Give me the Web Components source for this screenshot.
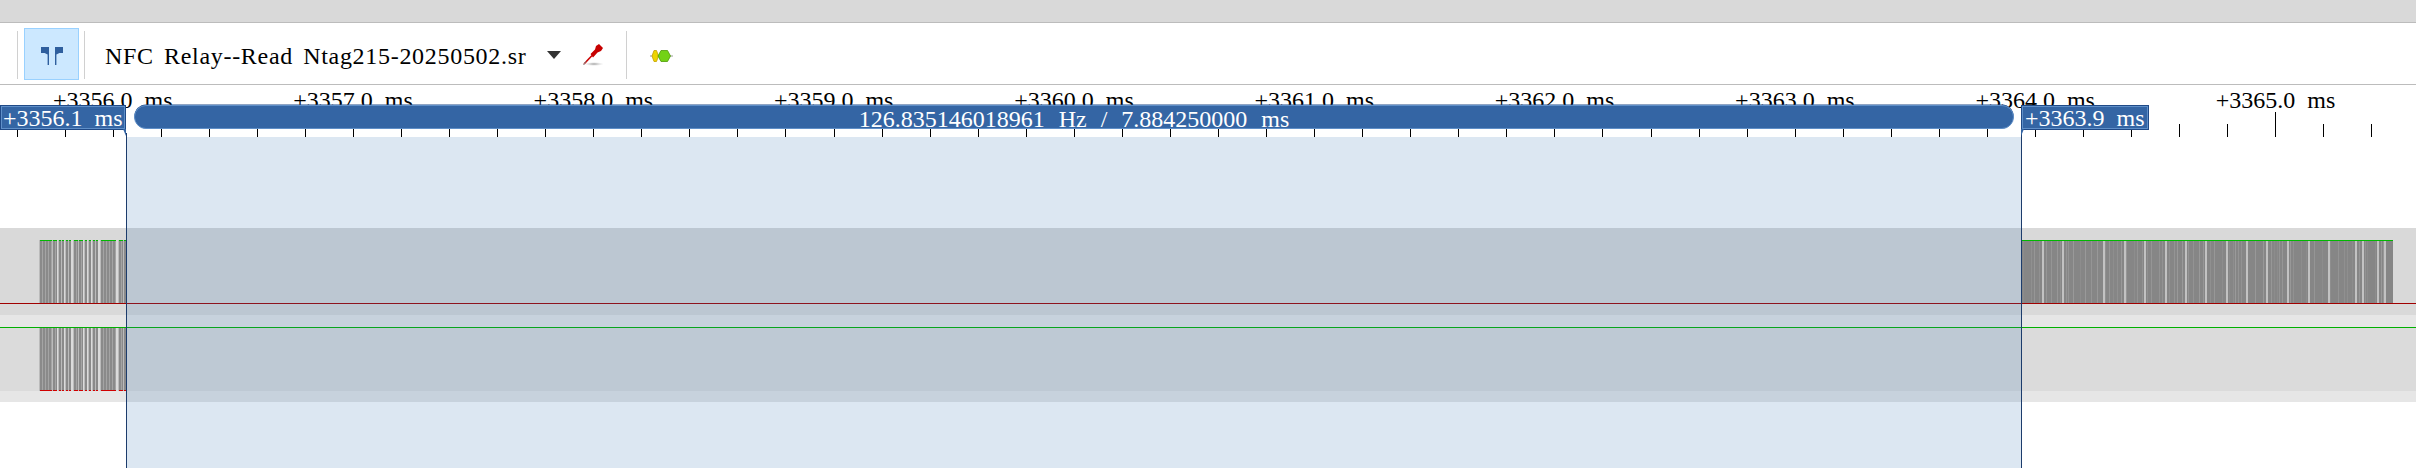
<!DOCTYPE html>
<html>
<head>
<meta charset="utf-8">
<title>PulseView</title>
<style>
    html, body { margin: 0; padding: 0; background: white; overflow: hidden; }
</style>
</head>
<body>
<pv-app>
    <pv-toolbar slot="toolbar">
        <pv-sep></pv-sep>
        <pv-button></pv-button>
        <pv-sep></pv-sep>
        <pv-file>NFC Relay--Read Ntag215-20250502.sr</pv-file>
        <pv-probe></pv-probe>
        <pv-sep></pv-sep>
        <pv-decoder></pv-decoder>
    </pv-toolbar>
    <pv-view slot="view"></pv-view>
</pv-app>

<script>
const SERIF = '"Liberation Serif", serif';

class PvApp extends HTMLElement {
    constructor () {
        super();
        this.attachShadow({mode: 'open'}).innerHTML = `
        <style>
            :host { display: flex; flex-direction: column; width: 2416px; height: 468px; background: white; font: 24px/24px ${SERIF}; color: #000; }
            .top { height: 22px; flex: none; background: #d9d9d9; border-bottom: 1px solid #bcbcbc; }
            .tb { flex: none; }
            .v { flex: 1; min-height: 0; }
        </style>
        <div class="top"></div>
        <div class="tb"><slot name="toolbar"></slot></div>
        <div class="v"><slot name="view"></slot></div>`;
    }
}

class PvToolbar extends HTMLElement {
    constructor () {
        super();
        this.attachShadow({mode: 'open'}).innerHTML = `
        <style>
            :host { display: flex; align-items: center; height: 62px; box-sizing: border-box; border-bottom: 1px solid #bcbcbc; padding: 1px 0 0 17px; }
        </style>
        <slot></slot>`;
    }
}

class PvSep extends HTMLElement {
    constructor () {
        super();
        this.attachShadow({mode: 'open'}).innerHTML = `
        <style>
            :host { display: block; width: 1px; height: 48px; margin-top: 2px; background: #d0d0d0; flex: none; }
        </style>`;
    }
}

class PvButton extends HTMLElement {
    constructor () {
        super();
        this.attachShadow({mode: 'open'}).innerHTML = `
        <style>
            :host { display: block; flex: none; box-sizing: border-box; width: 55px; height: 52px; margin: 0 5px 0 6px; background: #cce8ff; border: 1px solid #99d1ff; }
            svg { display: block; }
        </style>
        <svg width="53" height="50" viewBox="25 29 53 50">
            <path d="M41 47h8v18h-1.4v-10.5l-3 -1.5h-3.6z" fill="#2f5f9e"/>
            <path d="M63 47h-8v18h1.4v-10.5l3 -1.5h3.6z" fill="#2f5f9e"/>
        </svg>`;
    }
}

class PvFile extends HTMLElement {
    constructor () {
        super();
        this.attachShadow({mode: 'open'}).innerHTML = `
        <style>
            :host { display: flex; align-items: center; flex: none; margin-left: 20px; white-space: pre; }
            .name { width: 421px; padding-top: 4px; letter-spacing: .7px; word-spacing: 3.5px; }
            .arrow { width: 14px; height: 8px; margin: 2px 0 0 21px; background: #333; clip-path: polygon(0 0, 100% 0, 50% 100%); }
        </style>
        <div class="name"><slot></slot></div><div class="arrow"></div>`;
    }
}

class PvProbe extends HTMLElement {
    constructor () {
        super();
        this.attachShadow({mode: 'open'}).innerHTML = `
        <style>
            :host { display: block; flex: none; width: 22px; height: 24px; margin: 2px 22px 0 21px; }
            svg { display: block; }
        </style>
        <svg width="22" height="24" viewBox="582 43 22 24">
            <defs><radialGradient id="s"><stop offset="0" stop-color="#999"/><stop offset="1" stop-color="#ddd" stop-opacity="0"/></radialGradient></defs>
            <ellipse cx="594" cy="64" rx="10" ry="2" fill="url(#s)"/>
            <path d="M584 64 L592 55.5" stroke="#c00" stroke-width="1.6" fill="none"/>
            <path d="M583.5 65 L586 61" stroke="#888" stroke-width="1" fill="none"/>
            <path d="M590.5 54 L595 49.5 L596 46 L599 44 L603 48 L601 51 L597.5 52.5 L593 57.5 Z" fill="#c70000"/>
        </svg>`;
    }
}

class PvDecoder extends HTMLElement {
    constructor () {
        super();
        this.attachShadow({mode: 'open'}).innerHTML = `
        <style>
            :host { display: block; flex: none; width: 24px; height: 14px; margin: 3px 0 0 22px; }
            svg { display: block; }
        </style>
        <svg width="24" height="14" viewBox="648 48.5 24 14">
            <path d="M649 55.5h23" stroke="#999" stroke-width="1"/>
            <path d="M651 55.5 L653 50 L655.5 50 L657.5 55.5 L655.5 61 L653 61 Z" fill="#edd400" stroke="#c4a000" stroke-width=".8"/>
            <path d="M657 55.5 L660 50 L666.5 50 L669.5 55.5 L666.5 61 L660 61 Z" fill="#73d216" stroke="#4e9a06" stroke-width=".8"/>
        </svg>`;
    }
}

class PvRuler extends HTMLElement {
    constructor () {
        super();
        const root = this.attachShadow({mode: 'open'});
        const step = 48.06;
        let ticks = '';
        for (let i = 0; 16.5 + i * step < 2416; i++) {
            const x = Math.round(16.5 + i * step) + 0.5;
            const major = (i - 2) % 5 == 0;
            ticks += `<path d="M${x} ${major ? 27 : 39}V52" stroke="#000"/>`;
        }
        let labels = '';
        for (let n = 0; n < 10; n++) {
            const cx = 112.8 + n * 240.3;
            labels += `<span style="left:${cx - 70}px">+${3356 + n}.0 ms</span>`;
        }
        root.innerHTML = `
        <style>
            :host { display: block; position: relative; height: 52px; flex: none; }
            svg { position: absolute; left: 0; top: 0; }
            span { position: absolute; top: 3px; width: 140px; text-align: center; white-space: pre; word-spacing: 6px; }
        </style>
        <svg width="2416" height="52" shape-rendering="crispEdges">${ticks}</svg>
        ${labels}`;
    }
}

// дорожка сигнала: полосы нарисованы в svg
class PvTrace extends HTMLElement {
    static get bars () {
        return [[40,12],[53,4],[59,2],[62,2],[66,2],[69,2],[74,4],[79,4],[85,2],[89,2],[93,2],[96,2],[101,15],[119,4],[124,2]];
    }
    connectedCallback () {
        const root = this.attachShadow({mode: 'open'});
        const h = +this.getAttribute('h');
        const bottom = +this.getAttribute('bars-h');
        const topLine = this.getAttribute('top');
        const botLine = this.getAttribute('bot');
        const y = +this.dataset.y;
        let s = '';
        for (const [x, w] of PvTrace.bars) {
            s += `<rect x="${x}" y="${y}" width="${w}" height="${bottom}" fill="#8a8a8a"/>`;
            for (let i = 2; i < w; i += 3) {
                s += `<rect x="${x + i}" y="${y}" width="1" height="${bottom}" fill="#a4a4a4"/>`;
            }
            s += `<rect x="${x - 1}" y="${y}" width="1" height="${bottom}" fill="#bbb"/>`;
            if (topLine) s += `<rect x="${x}" y="${y}" width="${w}" height="1" fill="${topLine}"/>`;
            if (botLine) s += `<rect x="${x}" y="${y + bottom - 1}" width="${w}" height="1" fill="${botLine}"/>`;
        }
        if (this.hasAttribute('busy')) {
            s += `<rect x="2021" y="${y}" width="372" height="${bottom}" fill="#868686"/>`;
            let seed = 7;
            const rnd = () => (seed = (seed * 16807) % 2147483647) / 2147483647;
            for (let x = 2023; x < 2390; x += 2 + Math.floor(rnd() * 7)) {
                s += `<rect x="${x}" y="${y + 1}" width="1" height="${bottom - 1}" fill="#9a9a9a" opacity="${0.3 + rnd() * 0.7}"/>`;
            }
            for (const p of [186,247,370,431,492,555,615,676,738,798,858,921,983,1043,1125,1145,1192,1213]) {
                s += `<rect x="${1980 + Math.round(p / 3)}" y="${y + 1}" width="2" height="${bottom - 1}" fill="#c2c2c2"/>`;
            }
            s += `<rect x="2021" y="${y}" width="372" height="1" fill="#00b800"/>`;
        }
        root.innerHTML = `
        <style>
            :host { display: block; height: ${h}px; flex: none; background: ${this.getAttribute('bg')}; }
            svg { display: block; }
        </style>
        <svg width="2416" height="${h}" shape-rendering="crispEdges">
            ${s}
            <rect x="0" y="${this.getAttribute('line-y')}" width="2416" height="1" fill="${this.getAttribute('line')}"/>
        </svg>`;
    }
}

class PvSelection extends HTMLElement {
    constructor () {
        super();
        this.attachShadow({mode: 'open'}).innerHTML = `
        <style>
            :host { display: block; position: absolute; left: 0; top: 0; width: 2416px; height: 383px; color: #fff; }
            .fill { position: absolute; left: 127px; top: 52px; width: 1894px; bottom: 0; background: rgba(50,110,180,.17); }
            .cur { position: absolute; top: 48px; bottom: 0; width: 1px; background: #1c3c6c; }
            .flag, .bar { position: absolute; top: 20px; height: 25px; box-sizing: border-box; background: #3465a4; border: 1px solid #204a87; white-space: pre; word-spacing: 6px; }
            .flag { box-shadow: inset 0 0 0 1px #5f8fc8; }
            .flag::after { content: ""; position: absolute; top: 23px; width: 3px; height: 7px; background: #3465a4; }
            .l { left: 0; width: 126px; padding-left: 2px; }
            .l::after { right: -1px; clip-path: polygon(0 0, 100% 0, 100% 100%); }
            .r { left: 2021px; width: 128px; padding-left: 3px; }
            .r::after { left: -1px; clip-path: polygon(0 0, 100% 0, 0 100%); }
            .bar { left: 134px; width: 1880px; height: 24px; border-radius: 12px; text-align: center; padding-top: 1px; word-spacing: 8px; border-color: #5f8fc8; box-shadow: 0 -1px 0 -0.5px #204a87; }
        </style>
        <div class="fill"></div>
        <div class="cur" style="left:126px"></div>
        <div class="cur" style="left:2021px"></div>
        <div class="flag l">+3356.1 ms</div>
        <div class="bar">126.835146018961 Hz / 7.884250000 ms</div>
        <div class="flag r">+3363.9 ms</div>`;
    }
}

class PvView extends HTMLElement {
    constructor () {
        super();
        this.attachShadow({mode: 'open'}).innerHTML = `
        <style>
            :host { display: flex; flex-direction: column; position: relative; height: 100%; }
            .gap { height: 91px; flex: none; }
        </style>
        <pv-ruler></pv-ruler>
        <div class="gap"></div>
        <pv-trace h="87" bg="#d9d9d9" bars-h="64" data-y="12" top="#00b800" line="#a00000" line-y="75" busy></pv-trace>
        <pv-trace h="87" bg="linear-gradient(#e6e6e6 0 12px, #dbdbdb 0 76px, #e6e6e6 0)" bars-h="64" data-y="12" bot="#d00000" line="#00b000" line-y="12"></pv-trace>
        <pv-selection></pv-selection>`;
    }
}

customElements.define('pv-app', PvApp);
customElements.define('pv-toolbar', PvToolbar);
customElements.define('pv-sep', PvSep);
customElements.define('pv-button', PvButton);
customElements.define('pv-file', PvFile);
customElements.define('pv-probe', PvProbe);
customElements.define('pv-decoder', PvDecoder);
customElements.define('pv-ruler', PvRuler);
customElements.define('pv-trace', PvTrace);
customElements.define('pv-selection', PvSelection);
customElements.define('pv-view', PvView);
</script>
</body>
</html>
